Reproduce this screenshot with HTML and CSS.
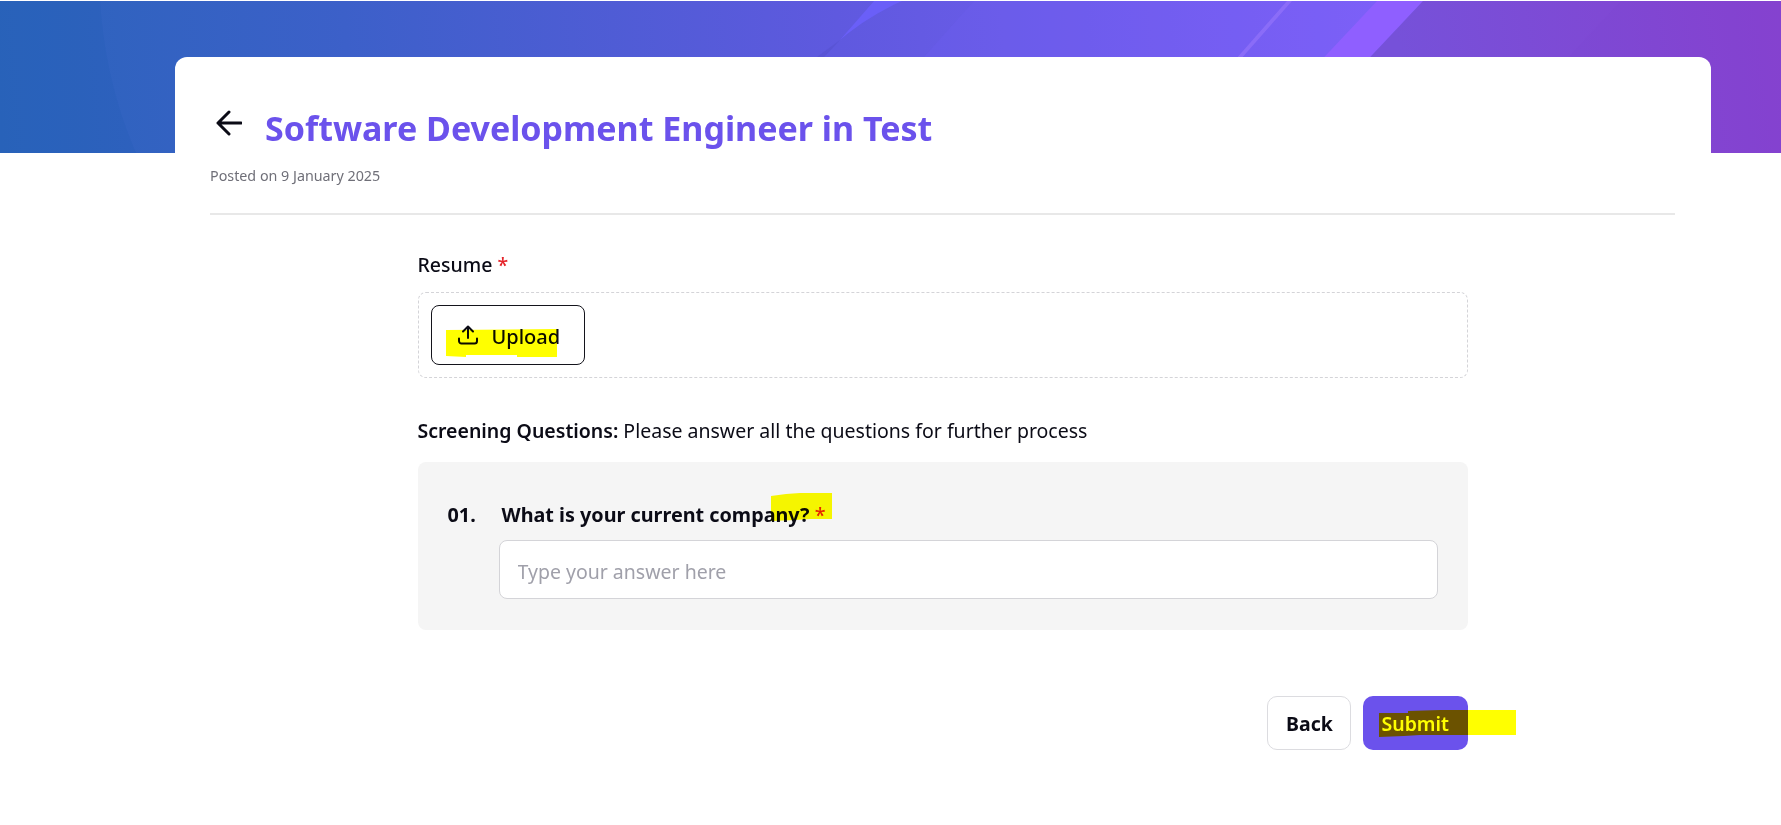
FILE: index.html
```html
<!DOCTYPE html>
<html lang="en">
<head>
<meta charset="utf-8">
<title>Software Development Engineer in Test</title>
<link rel="stylesheet" href="styles.css">
</head>
<body>
<div class="banner">
  <svg class="banner-art" viewBox="0 0 1781 152" preserveAspectRatio="none" aria-hidden="true">
    <defs>
      <linearGradient id="base" gradientUnits="userSpaceOnUse" x1="0" y1="120" x2="1400" y2="20">
        <stop offset="0" stop-color="#2b64bb"/>
        <stop offset="0.25" stop-color="#3c60c9"/>
        <stop offset="0.6" stop-color="#5f59df"/>
        <stop offset="1" stop-color="#8160fa"/>
      </linearGradient>
      <linearGradient id="dark" gradientUnits="userSpaceOnUse" x1="1400" y1="60" x2="1781" y2="10">
        <stop offset="0" stop-color="#7651d9"/>
        <stop offset="1" stop-color="#8742d0"/>
      </linearGradient>
    </defs>
    <rect width="1781" height="152" fill="url(#base)"/>
    <path d="M100 0 C104 60 118 110 136 152 H0 V0 Z" fill="#1e5ab0" opacity="0.18"/>
    <path d="M974 0 L924 56 L790 152 H1781 V0 Z" fill="#7060f5" opacity="0.22"/>
    <path d="M874 0 L840 39 C860 22 880 10 902 0 Z" fill="#6a5ff8"/>
    <path d="M840 39 L817 56 H824 C830 50 835 44 840 39 Z" fill="#5450cc" opacity="0.5"/>
    <path d="M1287 0 L1292 0 L1158 152 L1153 152 Z" fill="#9a78fb" opacity="0.55"/>
    <path d="M1377 0 H1423 L1280 152 H1234 Z" fill="#8f5fff"/>
    <path d="M1423 0 H1781 V152 H1280 Z" fill="url(#dark)"/>
    <path d="M1621 0 L1480 152 H1781 V0 Z" fill="#7a3fd0" opacity="0.12"/>
  </svg>
</div>

<main class="card">
  <header class="job-head">
    <div class="title-row">
      <a class="back-link" href="#" aria-label="Back">
        <svg class="back-icon" viewBox="0 0 26 26" aria-hidden="true">
          <path d="M25 13H2M13 2 2 13l11 11"/>
        </svg>
      </a>
      <h1 class="job-title">Software Development Engineer in Test</h1>
    </div>
    <p class="posted">Posted on 9 January 2025</p>
  </header>

  <form class="apply-form">
    <div class="field-label">Resume <span class="req">*</span></div>
    <div class="drop-zone">
      <button type="button" class="upload-btn">
        <svg class="upload-icon" viewBox="0 0 20 20" aria-hidden="true">
          <path d="M10 13V1.500M5 6.500l5-5 5 5M1 13.500V16a2.500 2.500 0 0 0 2.500 2.500h13A2.500 2.500 0 0 0 19 16v-2.500"/>
        </svg>
        <span class="upload-label">Upload</span>
      </button>
    </div>

    <p class="screen-intro"><strong>Screening Questions:</strong> Please answer all the questions for further process</p>

    <section class="question-box">
      <div class="q-row">
        <span class="q-num">01.</span>
        <span class="q-text">What is your current company? <span class="req q-req">*</span></span>
      </div>
      <input class="q-input" type="text" placeholder="Type your answer here">
    </section>

    <div class="actions">
      <button type="button" class="btn btn-back">Back</button>
      <button type="button" class="btn btn-submit">Submit</button>
    </div>
  </form>
</main>

<svg class="marker" viewBox="0 0 1781 825" aria-hidden="true">
  <path d="M446 330 L557 329 V357 L517 357 L517 355 L466 355 L466 357 L446 356 Z"/>
  <path d="M771 496 L786 494 L800 493 H832 V519 H810 L795 520 L771 521 Z"/>
  <path d="M1379 713 H1408 V711 L1440 710 H1516 V735 H1420 L1404 736 L1379 737 Z"/>
</svg>
</body>
</html>
```
FILE: styles.css
```css
* { box-sizing: border-box; }
html, body { margin: 0; padding: 0; }
body {
  position: relative;
  height: 825px;
  overflow: hidden;
  background: #fff;
  color: #0b0b16;
  font-family: "Noto Sans", "Open Sans", sans-serif;
}
.banner {
  height: 152px;
  margin-top: 1px;
}
.banner-art { display: block; width: 100%; height: 100%; }
.card {
  position: relative;
  width: 1536px;
  margin: -96px 0 0 175px;
  padding: 0 36px 0 35px;
  background: #fff;
  border-radius: 12px 12px 0 0;
}
.job-head {
  padding-top: 47px;
  height: 158px;
  border-bottom: 2px solid #e8e8e8;
}
.title-row { display: flex; align-items: center; gap: 23px; height: 48px; padding-left: 6px; }
.back-link { display: flex; margin-bottom: 10px; }
.back-icon { width: 26px; height: 26px; fill: none; stroke: #0b0b16; stroke-width: 3; stroke-linecap: round; stroke-linejoin: round; }
.job-title { margin: 0; font-size: 34px; font-weight: 700; line-height: 48px; color: #6b52ec; white-space: nowrap; }
.posted { margin: 14px 0 0; font-size: 14.3px; line-height: 20px; color: #6f6f78; }
.apply-form { width: 1050px; margin: 0 auto; }
.field-label { margin-top: 36px; font-size: 19.500px; line-height: 28px; font-weight: 500; }
.req { color: #e5242a; }
.q-req { font-weight: 500; }
.drop-zone {
  height: 86px;
  margin-top: 13px;
  padding: 12px;
  border: 1px dashed #d4d4d8;
  border-radius: 8px;
}
.upload-btn {
  display: flex;
  align-items: center;
  gap: 14px;
  width: 154px;
  height: 60px;
  padding: 0 0 0 26px;
  background: #fff;
  border: 1px solid #14141c;
  border-radius: 8px;
  font: 500 20px "Noto Sans", sans-serif;
  color: #0b0b16;
}
.upload-label { padding-top: 2px; }
.upload-icon { width: 20px; height: 20px; fill: none; stroke: #0b0b16; stroke-width: 2; stroke-linecap: round; stroke-linejoin: round; }
.screen-intro { margin: 39px 0 0; font-size: 19.500px; line-height: 28px; }
.screen-intro strong { font-weight: 600; }
.question-box {
  height: 168px;
  margin-top: 17px;
  padding: 32px 30px 30px 30px;
  background: #f5f5f5;
  border-radius: 8px;
}
.q-row { display: flex; align-items: center; height: 40px; font-size: 19.800px; font-weight: 700; }
.q-num { width: 54px; }
.q-text { white-space: nowrap; }
.q-input {
  display: block;
  width: 939px;
  height: 59px;
  margin: 6px 0 0 51px;
  padding: 3px 18px 0;
  background: #fff;
  border: 1px solid #d4d4d8;
  border-radius: 8px;
  font: 400 19.500px "Noto Sans", sans-serif;
  outline: none;
}
.q-input::placeholder { color: #a0a0aa; opacity: 1; }
.actions { display: flex; justify-content: flex-end; gap: 12px; margin-top: 66px; }
.btn {
  height: 54px;
  border-radius: 10px;
  font: 700 19.500px "Noto Sans", sans-serif;
  padding: 0;
}
.btn-back { width: 84px; padding-left: 2px; background: #fff; border: 1px solid #dcdce0; color: #0b0b16; }
.btn-submit { width: 105px; background: #6b52ec; border: 0; color: #fff; font-weight: 600; text-align: left; padding-left: 19px; }
.marker {
  position: absolute;
  left: 0;
  top: 0;
  width: 1781px;
  height: 825px;
  pointer-events: none;
  mix-blend-mode: multiply;
  fill: #ffff00;
}
```
